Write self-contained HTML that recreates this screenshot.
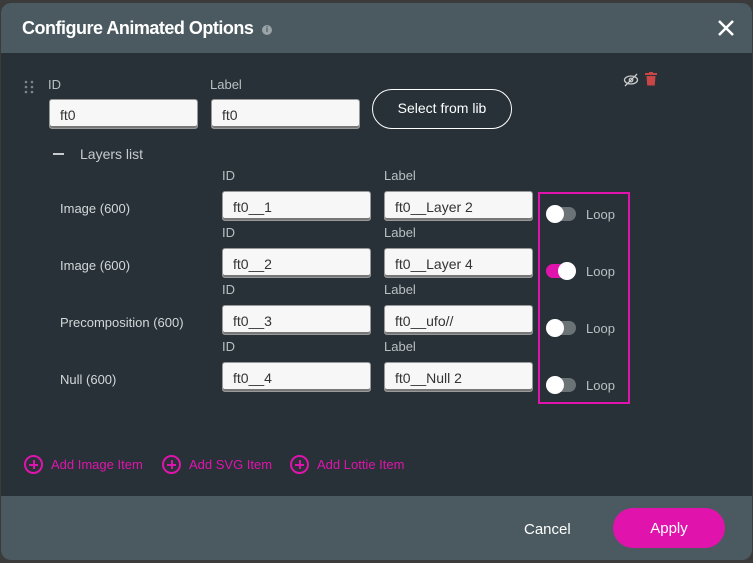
<!DOCTYPE html>
<html><head><meta charset="utf-8"><style>
*{box-sizing:border-box;margin:0;padding:0}
body{width:753px;height:563px;background:#3b3b3b;font-family:"Liberation Sans",sans-serif;position:relative;overflow:hidden}
.modal{position:absolute;left:1px;top:3px;width:751px;height:557px;background:#273137;border-radius:10px;overflow:hidden}
.hdr{position:absolute;left:0;top:0;width:100%;height:50px;background:#4b5a60}
.ftr{position:absolute;left:0;top:493px;width:100%;height:64px;background:#4b5a60}
.a{position:absolute;white-space:nowrap}
.t{color:#d3d8da;font-size:13px}
.inp{position:absolute;height:30px;background:#f7f7f7;border:1px solid #999;border-radius:3px;box-shadow:inset 0 -2px 0 #777;color:#333;font-size:14px;padding:7px 10px}
.lbl{color:#b9c0c3;font-size:13px}
.tg{position:absolute;width:30px;height:14px;border-radius:7px;background:#6b7377}
.tg i{position:absolute;top:-2px;width:18px;height:18px;border-radius:50%;background:#fff}
.pk{color:#e014ad;font-size:13px}
.pl{position:absolute;width:19px;height:19px;border:2px solid #e014ad;border-radius:50%}
.pl:before,.pl:after{content:"";position:absolute;background:#e014ad}
.pl:before{left:3px;top:6.5px;width:9px;height:2px}
.pl:after{left:6.5px;top:3px;width:2px;height:9px}
</style></head><body>
<div class="modal">
<div class="hdr"></div>
<div class="a" style="left:21px;top:15px;color:#fff;font-size:18px;font-weight:bold;letter-spacing:-0.5px">Configure Animated Options</div>
<div class="a" style="left:261px;top:22px;width:10px;height:10px;border-radius:50%;background:#9aa3a7;color:#4b5a60;font-size:8px;text-align:center;line-height:10px;font-weight:bold">i</div>
<svg class="a" style="left:716px;top:16px" width="18" height="18"><path d="M2 2L16 16M16 2L2 16" stroke="#fff" stroke-width="2.5"/></svg>

<svg class="a" style="left:23px;top:76px" width="10" height="16"><g fill="#7d878b"><circle cx="2" cy="3" r="1.3"/><circle cx="8" cy="3" r="1.3"/><circle cx="2" cy="8" r="1.3"/><circle cx="8" cy="8" r="1.3"/><circle cx="2" cy="13" r="1.3"/><circle cx="8" cy="13" r="1.3"/></g></svg>
<div class="a lbl" style="left:47px;top:74px">ID</div>
<div class="a lbl" style="left:209px;top:74px">Label</div>
<div class="inp" style="left:48px;top:96px;width:149px">ft0</div>
<div class="inp" style="left:210px;top:96px;width:149px">ft0</div>
<div class="a" style="left:371px;top:86px;width:140px;height:40px;border:1.5px solid #fff;border-radius:20px;color:#fff;font-size:14px;text-align:center;line-height:37px">Select from lib</div>
<svg class="a" style="left:622px;top:70px" width="16" height="14"><ellipse cx="8" cy="7" rx="6.5" ry="4" fill="none" stroke="#ccc" stroke-width="1.3"/><circle cx="8" cy="7" r="1.8" fill="none" stroke="#ccc" stroke-width="1.2"/><path d="M2 13L14 1" stroke="#ccc" stroke-width="1.3"/></svg>
<svg class="a" style="left:644px;top:69px" width="12" height="14"><rect x="0" y="1" width="12" height="2" fill="#c94646"/><rect x="4" y="0" width="4" height="2" fill="#c94646"/><path d="M1.5 4H10.5L9.8 13.5H2.2Z" fill="#c94646"/></svg>

<div class="a" style="left:52px;top:150px;width:11px;height:1.5px;background:#c6ccce"></div>
<div class="a t" style="left:79px;top:143px;font-size:14px;color:#c6ccce">Layers list</div>

<div class="a lbl" style="left:221px;top:165px">ID</div><div class="a lbl" style="left:383px;top:165px">Label</div>
<div class="a t" style="left:59px;top:198px">Image (600)</div>
<div class="inp" style="left:221px;top:188px;width:149px">ft0__1</div>
<div class="inp" style="left:383px;top:188px;width:149px">ft0__Layer 2</div>

<div class="a lbl" style="left:221px;top:222px">ID</div><div class="a lbl" style="left:383px;top:222px">Label</div>
<div class="a t" style="left:59px;top:255px">Image (600)</div>
<div class="inp" style="left:221px;top:245px;width:149px">ft0__2</div>
<div class="inp" style="left:383px;top:245px;width:149px">ft0__Layer 4</div>

<div class="a lbl" style="left:221px;top:279px">ID</div><div class="a lbl" style="left:383px;top:279px">Label</div>
<div class="a t" style="left:59px;top:312px">Precomposition (600)</div>
<div class="inp" style="left:221px;top:302px;width:149px">ft0__3</div>
<div class="inp" style="left:383px;top:302px;width:149px">ft0__ufo//</div>

<div class="a lbl" style="left:221px;top:336px">ID</div><div class="a lbl" style="left:383px;top:336px">Label</div>
<div class="a t" style="left:59px;top:369px">Null (600)</div>
<div class="inp" style="left:221px;top:359px;width:149px">ft0__4</div>
<div class="inp" style="left:383px;top:359px;width:149px">ft0__Null 2</div>

<div class="a" style="left:537px;top:189px;width:92px;height:212px;border:2px solid #e014ad"></div>
<div class="tg" style="left:545px;top:204px"><i style="left:0"></i></div><div class="a lbl" style="left:585px;top:204px">Loop</div>
<div class="tg" style="left:545px;top:261px;background:#e014ad"><i style="left:12px"></i></div><div class="a lbl" style="left:585px;top:261px">Loop</div>
<div class="tg" style="left:545px;top:318px"><i style="left:0"></i></div><div class="a lbl" style="left:585px;top:318px">Loop</div>
<div class="tg" style="left:545px;top:375px"><i style="left:0"></i></div><div class="a lbl" style="left:585px;top:375px">Loop</div>

<div class="pl" style="left:23px;top:452px"></div><div class="a pk" style="left:50px;top:454px">Add Image Item</div>
<div class="pl" style="left:161px;top:452px"></div><div class="a pk" style="left:188px;top:454px">Add SVG Item</div>
<div class="pl" style="left:289px;top:452px"></div><div class="a pk" style="left:316px;top:454px">Add Lottie Item</div>

<div class="ftr"></div>
<div class="a" style="left:523px;top:518px;color:#fff;font-size:15px">Cancel</div>
<div class="a" style="left:612px;top:505px;width:112px;height:40px;border-radius:20px;background:#e014ad;color:#fff;font-size:15px;text-align:center;line-height:42px">Apply</div>
</div>
</body></html>
